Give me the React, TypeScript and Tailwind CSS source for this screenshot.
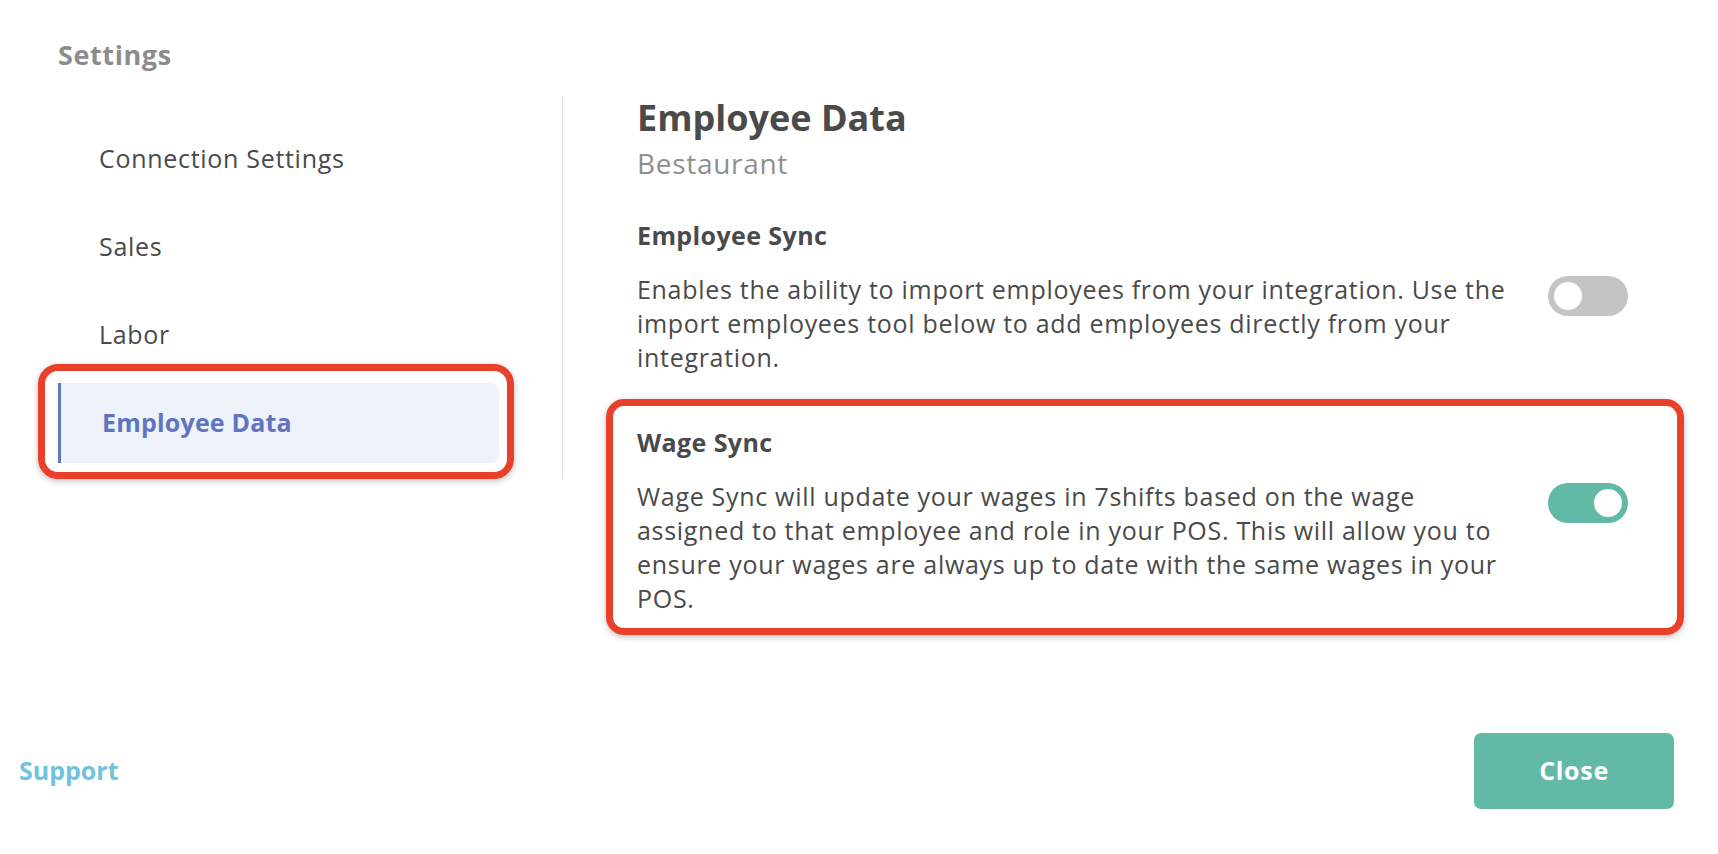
import React, { useState } from 'react'

const font = { fontFamily: '"Open Sans", Lato, Arial, sans-serif' }

const navItems = ['Connection Settings', 'Sales', 'Labor', 'Employee Data']

export default function App() {
  const [active, setActive] = useState('Employee Data')
  const [employeeSync, setEmployeeSync] = useState(false)
  const [wageSync, setWageSync] = useState(true)

  return (
    <div className="flex h-[854px] w-full flex-col bg-white text-[#4a4a4a]" style={font}>
      <div className="pl-[58px] pt-[38px] text-[27px] font-bold leading-[34px] tracking-[0.6px] text-[#8c8c8c]">
        Settings
      </div>

      <div className="mt-[24px] flex items-start">
        {/* left nav */}
        <div className="w-[563px] shrink-0 border-r border-[#dedede] pl-[58px]">
          <div className="flex w-[441px] flex-col gap-[8px] pb-[16px] pt-[23px]">
            {navItems.map((item) => (
              <NavItem
                key={item}
                label={item}
                active={item === active}
                onClick={() => setActive(item)}
              />
            ))}
          </div>
        </div>

        {/* content */}
        <div className="flex-1 pl-[74px] pr-[90px]">
          <h1 className="pt-[2px] text-[36px] font-bold leading-[40px] text-[#4a4a4a]">
            Employee Data
          </h1>
          <div className="mt-[9px] text-[28px] leading-[32px] tracking-[0.7px] text-[#8f8f8f]">
            Bestaurant
          </div>

          <Section
            className="mt-[41px]"
            title="Employee Sync"
            on={employeeSync}
            onToggle={() => setEmployeeSync(!employeeSync)}
          >
            Enables the ability to import employees from your integration. Use the import
            employees tool below to add employees directly from your integration.
          </Section>

          <div className="relative mt-[53px]">
            <Section title="Wage Sync" on={wageSync} onToggle={() => setWageSync(!wageSync)}>
              Wage Sync will update your wages in 7shifts based on the wage assigned to that
              employee and role in your POS. This will allow you to ensure your wages are always
              up to date with the same wages in your POS.
            </Section>
            <div className="pointer-events-none absolute bottom-[-20px] left-[-31px] right-[-56px] top-[-28px] rounded-[18px] border-[7px] border-[#e8402a] shadow-[0_2px_6px_rgba(0,0,0,0.25)]" />
          </div>
        </div>
      </div>

      <div className="mt-auto flex items-center justify-between pb-[45px] pl-[19px] pr-[44px]">
        <a href="#" className="text-[25px] font-bold text-[#6fc3dd]">
          Support
        </a>
        <button className="h-[76px] w-[200px] rounded-[7px] bg-[#62b9a6] text-[25px] font-bold tracking-[0.7px] text-white">
          Close
        </button>
      </div>
    </div>
  )
}

function NavItem({
  label,
  active,
  onClick,
}: {
  label: string
  active: boolean
  onClick: () => void
}) {
  return (
    <div className="relative">
      <button
        onClick={onClick}
        className={
          active
            ? 'flex h-[80px] w-full items-center rounded-r-[8px] border-l-[3px] border-[#6477c4] bg-[#eef2fb] pl-[41px] text-left text-[25px] font-bold tracking-[0.2px] text-[#6074c0]'
            : 'flex h-[80px] w-full items-center border-l-[3px] border-transparent pl-[38px] text-left text-[25px] tracking-[0.7px] text-[#4a4a4a]'
        }
      >
        {label}
      </button>
      {active && (
        <div className="pointer-events-none absolute bottom-[-16px] left-[-20px] right-[-15px] top-[-19px] rounded-[20px] border-[7px] border-[#e8402a] shadow-[0_2px_6px_rgba(0,0,0,0.25)]" />
      )}
    </div>
  )
}

function Section({
  title,
  on,
  onToggle,
  className,
  children,
}: {
  title: string
  on: boolean
  onToggle: () => void
  className?: string
  children: React.ReactNode
}) {
  return (
    <div className={className}>
      <div className="text-[25px] font-bold leading-[30px] tracking-[0.4px] text-[#4a4a4a]">
        {title}
      </div>
      <div className="mt-[22px] flex items-start justify-between">
        <p className="w-[870px] text-[25px] leading-[34px] tracking-[0.7px] text-[#4a4a4a]">
          {children}
        </p>
        <Toggle on={on} onClick={onToggle} />
      </div>
    </div>
  )
}

function Toggle({ on, onClick }: { on: boolean; onClick: () => void }) {
  return (
    <button
      onClick={onClick}
      className={
        on
          ? 'mt-[4px] flex h-[40px] w-[80px] shrink-0 items-center justify-end rounded-full bg-[#62b9a6] px-[6px]'
          : 'mt-[4px] flex h-[40px] w-[80px] shrink-0 items-center justify-start rounded-full bg-[#c4c4c4] px-[6px]'
      }
    >
      <span className="h-[28px] w-[28px] rounded-full bg-white" />
    </button>
  )
}
